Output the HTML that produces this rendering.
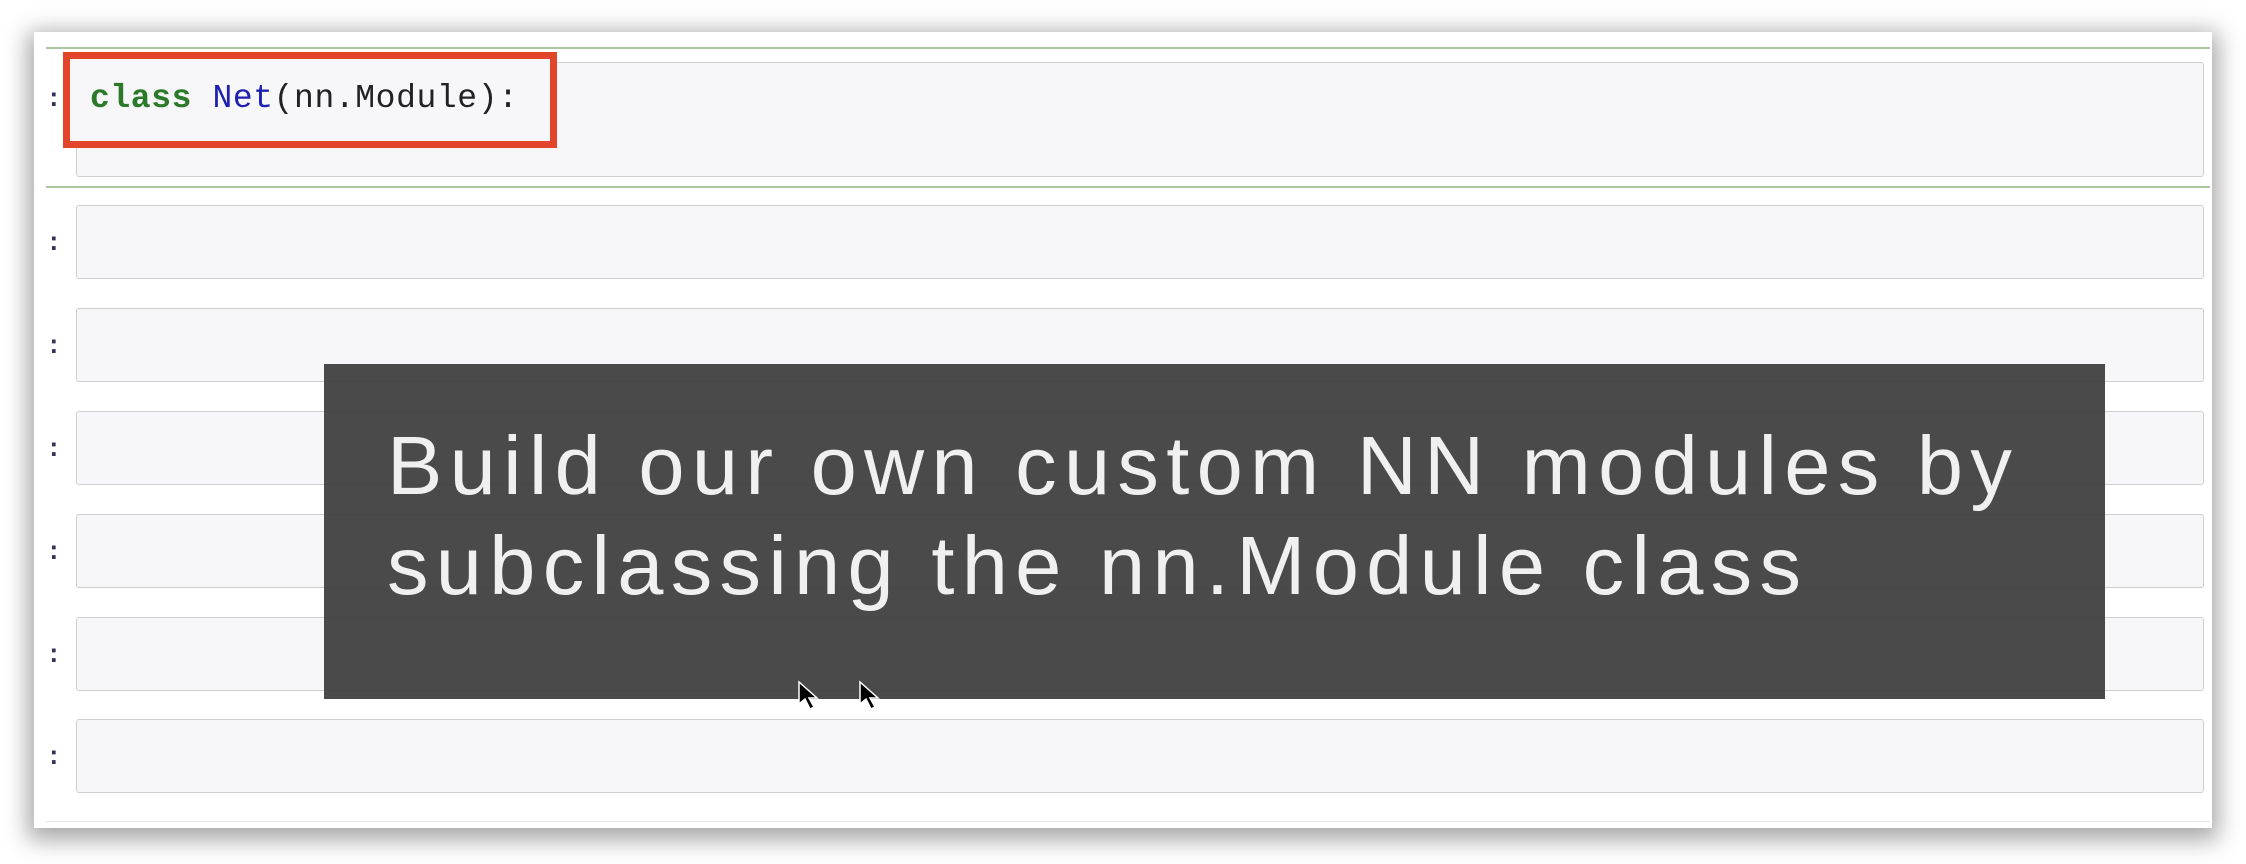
<!DOCTYPE html>
<html><head><style>
body{margin:0;width:2246px;height:864px;background:#fff;position:relative;overflow:hidden;font-family:"Liberation Sans",sans-serif}
.card{position:absolute;left:34px;top:32px;width:2178px;height:796px;background:#fff;box-shadow:0 6px 22px 6px rgba(0,0,0,.35)}
.g{position:absolute;left:46px;width:2164px;height:2px;background:#a9c7a0}
.box{position:absolute;left:76px;width:2126px;height:72px;background:#f7f7f9;border:1.5px solid #cfcfcf;border-radius:3px}
.p{position:absolute;left:46px;font:bold 26px "Liberation Mono",monospace;color:#335}
.red{position:absolute;left:63px;top:52px;width:480px;height:82px;border:7px solid #e2452a;background:#f7f7f9}
.code{position:absolute;left:90px;top:80px;font:33px "Liberation Mono",monospace;letter-spacing:0.6px;color:#222}
.ov{position:absolute;left:324px;top:364px;width:1781px;height:335px;background:rgba(60,60,60,.93)}
.ov div{position:absolute;left:63px;color:#f0f0f0;font-size:83px;letter-spacing:7.3px;white-space:nowrap}
</style></head><body>
<div class="card"></div>
<div class="g" style="top:47px"></div>
<div class="box" style="top:62px;height:113px"></div>
<div class="g" style="top:186px"></div>
<div class="red"></div>
<div class="p" style="top:84px">:</div>
<div class="code"><b style="color:#2a7a2a">class</b> <span style="color:#2020b0">Net</span>(nn.Module):</div>
<div class="box" style="top:205px"></div><div class="p" style="top:228px">:</div>
<div class="box" style="top:308px"></div><div class="p" style="top:331px">:</div>
<div class="box" style="top:411px"></div><div class="p" style="top:434px">:</div>
<div class="box" style="top:514px"></div><div class="p" style="top:537px">:</div>
<div class="box" style="top:617px"></div><div class="p" style="top:640px">:</div>
<div class="box" style="top:719px"></div><div class="p" style="top:742px">:</div>
<div style="position:absolute;left:46px;top:821px;width:2164px;height:1px;background:#e6e6e6"></div>
<div class="ov"><div style="top:54px">Build our own custom NN modules by</div><div style="top:154px">subclassing the nn.Module class</div></div>
<svg style="position:absolute;left:797px;top:680px" width="90" height="40"><path d="M2 2 L2 24 L8 19 L13 29 L17 27 L12 18 L20 18 Z" fill="#000" stroke="#fff" stroke-width="1.5"/><path d="M63 2 L63 24 L69 19 L74 29 L78 27 L73 18 L81 18 Z" fill="#000" stroke="#fff" stroke-width="1.5"/></svg>
</body></html>
